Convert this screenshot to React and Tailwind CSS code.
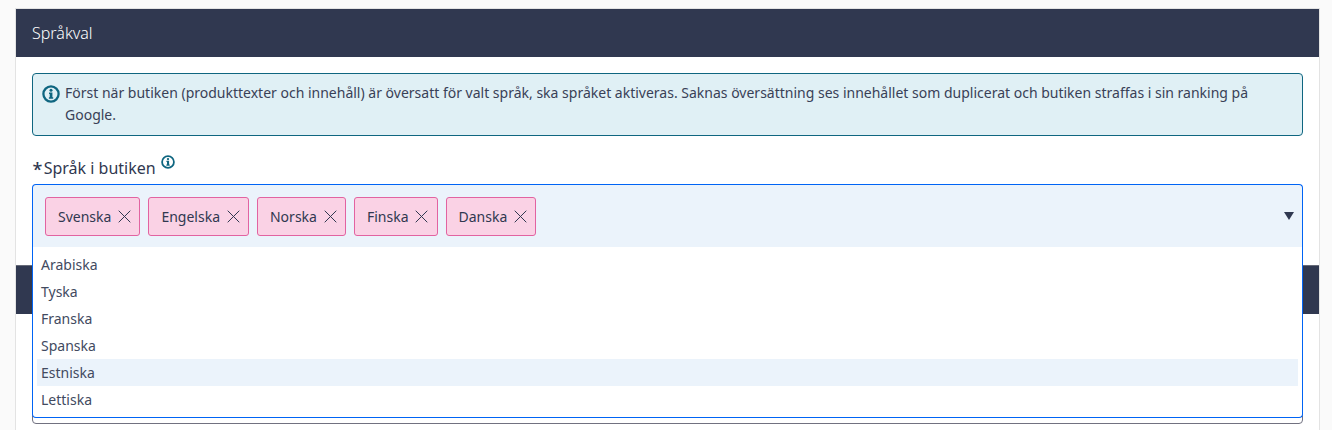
import React, { useState } from 'react';

const LANGUAGES = ['Arabiska', 'Tyska', 'Franska', 'Spanska', 'Estniska', 'Lettiska'];

function InfoIcon({ className }) {
    return (
        <svg viewBox="0 0 18 18" className={className} fill="none">
            <circle cx="9" cy="9" r="7.6" stroke="#0f6680" strokeWidth="2.3" />
            <circle cx="9" cy="5.3" r="1.5" fill="#0f6680" />
            <path d="M7 7.5H10.4V12.2H11.2V13.7H6.9V12.2H7.7V9H7Z" fill="#0f6680" />
        </svg>
    );
}

function Tag({ label, onRemove }) {
    return (
        <span className="flex h-[39px] items-center rounded-[3px] border border-[#e263a1] bg-[#fad2e5] pr-[8.25px] pl-3 text-sm">
            <span className="pt-px">{label}</span>
            <button type="button" onClick={onRemove} className="ml-[6.75px] h-[13px] w-[13px]" aria-label={`Ta bort ${label}`}>
                <svg viewBox="0 0 13 13" className="block h-[13px] w-[13px]">
                    <path d="M0.7 0.7L12.3 12.3M12.3 0.7L0.7 12.3" stroke="#303850" strokeWidth="1" />
                </svg>
            </button>
        </span>
    );
}

export default function App() {
    const [selected, setSelected] = useState(['Svenska', 'Engelska', 'Norska', 'Finska', 'Danska']);
    const [active, setActive] = useState('Estniska');

    return (
        <div className="h-[430px] overflow-hidden bg-[#fafafa] pt-2 pr-3 pl-[15px] font-['Noto_Sans',sans-serif] text-[#303850]">
            <div className="h-[440px] border border-[#e3e3e3] bg-white">
                <h2 className="flex h-12 items-center bg-[#303850] px-4 text-base font-light text-white">Språkval</h2>

                <div className="px-4 pt-4">
                    <div className="flex h-[63px] rounded-[4px] border border-[#0f6680] bg-[#e0f0f5] pt-2 pl-[9px]">
                        <InfoIcon className="mt-[3px] mr-[5px] h-[18px] w-[18px] shrink-0" />
                        <p className="pr-10 text-sm leading-[22px] text-[#394157]">
                            Först när butiken (produkttexter och innehåll) är översatt för valt språk, ska språket aktiveras. Saknas översättning ses innehållet som duplicerat och butiken straffas i sin ranking på Google.
                        </p>
                    </div>

                    <div className="flex h-12 pt-5 text-base leading-6">
                        <span className="w-[11.7px] pt-px pl-[0.5px] text-lg leading-6 font-medium">*</span>
                        <span>Språk i butiken</span>
                        <InfoIcon className="-mt-px ml-[5px] h-[14px] w-[14px]" />
                    </div>

                    <div className="relative">
                        <div className="flex h-[63px] items-center gap-2 rounded-t-[4px] border border-b-0 border-[#0064f5] bg-[#ebf3fb] pr-2 pl-3">
                            {selected.map(name => (
                                <Tag key={name} label={name} onRemove={() => setSelected(selected.filter(s => s !== name))} />
                            ))}
                            <svg viewBox="0 0 10 8" className="ml-auto h-2 w-[10px]">
                                <path d="M0 0H10L5 8Z" fill="#303850" />
                            </svg>
                        </div>
                        {/* open list, lies over the next section */}
                        <ul className="absolute top-[63px] right-0 left-0 z-10 h-[171px] rounded-b-[4px] border border-t-0 border-[#0064f5] bg-white px-1 pt-1">
                            {LANGUAGES.map(name => (
                                <li
                                    key={name}
                                    onMouseEnter={() => setActive(name)}
                                    className={`h-[27px] px-1 text-sm leading-[27px] text-[#424a60] ${active === name ? 'bg-[#ebf3fb]' : ''}`}
                                >
                                    {name}
                                </li>
                            ))}
                        </ul>
                    </div>
                </div>

                <div className="mt-[18px] h-[49px] border-t border-[#666a78] bg-[#303850]"></div>
                <div className="px-4 pt-4">
                    <div className="h-[94px] rounded-[4px] border border-[#717180]"></div>
                </div>
            </div>
        </div>
    );
}
